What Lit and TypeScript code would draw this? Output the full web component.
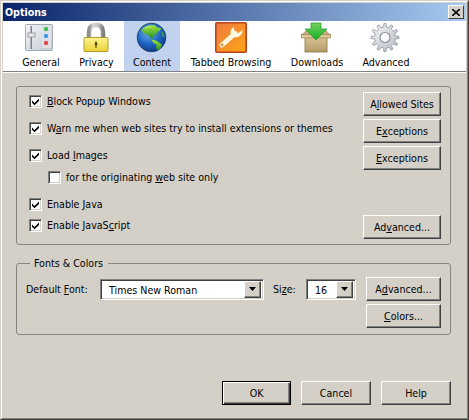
import { LitElement, html, css, svg } from "lit";
import { customElement } from "lit/decorators.js";

function gearPath(cx: number, cy: number, ro: number, ri: number, n: number) {
  const pts: string[] = [];
  for (let i = 0; i < n; i++) {
    const a = (i / n) * Math.PI * 2;
    const w = (Math.PI * 2) / n;
    const seq: [number, number][] = [
      [a - w * 0.5, ri],
      [a - w * 0.24, ri],
      [a - w * 0.16, ro],
      [a + w * 0.16, ro],
      [a + w * 0.24, ri],
    ];
    for (const [t, r] of seq) {
      pts.push(`${(cx + Math.cos(t) * r).toFixed(2)} ${(cy + Math.sin(t) * r).toFixed(2)}`);
    }
  }
  return "M" + pts.join("L") + "Z";
}

const generalIcon = svg`<svg class="ico" viewBox="0 0 32 32" width="32" height="32">
  <defs><linearGradient id="gp" x1="0" y1="0" x2="1" y2="1"><stop offset="0" stop-color="#f4f5f7"/><stop offset="1" stop-color="#c3c9d2"/></linearGradient></defs>
  <rect x="0.5" y="2.5" width="27" height="26" rx="1" fill="url(#gp)" stroke="#a4aab2"/>
  <rect x="5.500" y="4" width="1.500" height="23" fill="#7d8288"/>
  <rect x="3" y="11" width="7" height="4" fill="#e8e9ea" stroke="#8a8f95" stroke-width="0.8"/>
  <rect x="17" y="4" width="9" height="22" fill="#dfe2e6"/>
  <rect x="19" y="5" width="4" height="4" fill="#31b53d" stroke="#bfe0c0" stroke-width="0.6"/>
  <rect x="19" y="12" width="4" height="4" fill="#2f8fe0" stroke="#bcd6ee" stroke-width="0.6"/>
  <rect x="19" y="19" width="4" height="4" fill="#d9363c" stroke="#eec2c4" stroke-width="0.6"/>
</svg>`;

const privacyIcon = svg`<svg class="ico" viewBox="0 0 32 32" width="32" height="32">
  <defs>
    <linearGradient id="ly" x1="0" y1="0" x2="0" y2="1"><stop offset="0" stop-color="#fdf68e"/><stop offset="1" stop-color="#ead037"/></linearGradient>
    <linearGradient id="ls" x1="0" y1="0" x2="1" y2="0"><stop offset="0" stop-color="#8c8c8c"/><stop offset="0.3" stop-color="#d8d8d8"/><stop offset="0.7" stop-color="#bdbdbd"/><stop offset="1" stop-color="#7d7d7d"/></linearGradient>
  </defs>
  <path d="M8 16V10.500C8 5 10.500 3 15 3S22 5 22 10.500V16" fill="none" stroke="url(#ls)" stroke-width="4.500"/>
  <rect x="3" y="15.500" width="24" height="14" rx="1" fill="url(#ly)" stroke="#b29a2c"/>
  <path d="M15 18.500l1.600 4-1 1v2.500h-1.200V23.500l-1-1z" fill="#5a4a10"/>
</svg>`;

const contentIcon = svg`<svg class="ico" viewBox="0 0 32 32" width="32" height="32">
  <defs>
    <radialGradient id="gb" cx="0.4" cy="0.3" r="0.8"><stop offset="0" stop-color="#6fb4ee"/><stop offset="0.55" stop-color="#1c63c0"/><stop offset="1" stop-color="#0c2f73"/></radialGradient>
    <linearGradient id="gg" x1="0" y1="0" x2="0" y2="1"><stop offset="0" stop-color="#a5e63a"/><stop offset="1" stop-color="#21892e"/></linearGradient>
  </defs>
  <circle cx="15.500" cy="15.500" r="14.300" fill="url(#gb)" stroke="#10305f" stroke-width="0.8"/>
  <path d="M6 7.500C9 3.800 14 2.500 19 3.500L21 5.500 25 6 24 9 21.500 9.500 20 13 17.500 13.500 16.500 17 13.500 15 11.500 13 8.500 11.500 6.500 10.500z" fill="url(#gg)"/>
  <path d="M15.500 17.500L20 18.500 24 21 26 23 24 27 21.500 28.500 20 26 20.500 23 17 20.500z" fill="url(#gg)"/>
  <path d="M25.500 9l2.500 3 .5 4-2-2z" fill="#47a838"/>
  <path d="M9 7c2-1.500 4-2 6-2" fill="none" stroke="#e3fbb0" stroke-width="1" opacity=".6"/>
</svg>`;

const tabbedIcon = svg`<svg class="ico" viewBox="0 0 32 32" width="32" height="32">
  <defs><linearGradient id="or" x1="0" y1="0" x2="1" y2="1"><stop offset="0" stop-color="#ee7a42"/><stop offset="1" stop-color="#ffa514"/></linearGradient></defs>
  <rect x="0.800" y="0.800" width="30.400" height="29.400" rx="1" fill="url(#or)" stroke="#b8431c" stroke-width="1.600"/>
  <path d="M7 23L20 11.500" stroke="#fff6df" stroke-width="5" stroke-linecap="round" fill="none"/>
  <path d="M18.500 5A6.800 6.800 0 0 0 16 13L20.500 15.500A6.800 6.800 0 0 0 27.500 8L23.500 11 19.800 9.500z" fill="#fff6df"/>
  <circle cx="7" cy="23" r="1.400" fill="#f08a30"/>
</svg>`;

const downloadsIcon = svg`<svg class="ico" viewBox="0 0 32 32" width="32" height="32">
  <defs>
    <linearGradient id="bx" x1="0" y1="0" x2="0" y2="1"><stop offset="0" stop-color="#d9c597"/><stop offset="1" stop-color="#b59a66"/></linearGradient>
    <linearGradient id="ar" x1="0" y1="0" x2="0" y2="1"><stop offset="0" stop-color="#74d35d"/><stop offset="1" stop-color="#14ad24"/></linearGradient>
  </defs>
  <rect x="4" y="15" width="22" height="15" fill="url(#bx)" stroke="#8a7448" stroke-width="0.800"/>
  <path d="M4 15L0.500 13 5 9 9 9 8 15zM26 15L29.500 13 25 9 21 9 22 15z" fill="#c9b27d" stroke="#8f7a4e" stroke-width="0.600"/>
  <rect x="0.500" y="12.500" width="29" height="3.500" fill="#dcc99b" stroke="#8f7a4e" stroke-width="0.600"/>
  <path d="M10 1H20V7H26L15 18 4 7H10z" fill="url(#ar)" stroke="#2f9a33" stroke-width="0.800"/>
</svg>`;

const advancedIcon = svg`<svg class="ico" viewBox="0 0 32 32" width="32" height="32">
  <defs><linearGradient id="gr" x1="0" y1="0" x2="1" y2="1"><stop offset="0" stop-color="#f6f7f9"/><stop offset="1" stop-color="#b4b8c2"/></linearGradient></defs>
  <path d="${gearPath(15, 15.5, 14, 10.5, 12)}" fill="url(#gr)" stroke="#8f939e" stroke-width="0.800"/>
  <circle cx="15" cy="15.500" r="5" fill="#fff" stroke="#8d919c" stroke-width="1.200"/>
</svg>`;

const arrow = html`<span class="arrow"><svg width="7" height="4" viewBox="0 0 7 4"><path d="M0 0H7L3.500 4z" fill="#000"/></svg></span>`;

const check = html`<svg class="tick" width="9" height="9" viewBox="0 0 9 9"><path d="M1 3.500L3.500 6 8 1.500V4L3.500 8.300 1 5.800z" fill="#000"/></svg>`;

@customElement("app-root")
export class AppRoot extends LitElement {
  static styles = css`
    :host {
      display: block;
      width: 469px;
      height: 420px;
      font: 10.6px/13px "DejaVu Sans Condensed", "DejaVu Sans", sans-serif;
      color: #000;
      background: #d4d0c8;
    }
    * { box-sizing: border-box; }
    .frame {
      width: 469px;
      height: 420px;
      border: 1px solid;
      border-color: #d4d0c8 #404040 #404040 #d4d0c8;
    }
    .frame2 {
      height: 100%;
      border: 1px solid;
      border-color: #fff #808080 #808080 #fff;
      padding: 1px;
    }
    .title {
      height: 18px;
      background: linear-gradient(90deg, #0a246a, #a6caf0);
      display: flex;
      align-items: center;
      justify-content: space-between;
      padding: 0 2px;
      color: #fff;
      font-weight: bold;
    }
    .close {
      width: 16px;
      height: 14px;
      background: #d4d0c8;
      border: 1px solid;
      border-color: #fff #404040 #404040 #fff;
      display: flex;
      align-items: center;
      justify-content: center;
    }
    .toolbar {
      height: 50px;
      background: #fff;
      display: grid;
      grid-template-columns: 56px 55px 56px 102px 70px 68px;
      padding-left: 10px;
    }
    .tab {
      display: flex;
      flex-direction: column;
      align-items: center;
      padding-top: 1px;
      white-space: nowrap;
    }
    .tab.sel { background: #c1d2ee; }
    .tab .ico { display: block; margin-bottom: 2px; }
    .rule {
      height: 2px;
      border-top: 1px solid #808080;
      border-bottom: 1px solid #fff;
    }
    .body {
      padding: 13px 15px 0 13px;
    }
    .group {
      border: 1px solid #86847e;
      border-radius: 3px;
      display: flex;
      justify-content: space-between;
      height: 159px;
      padding: 5px 9px 0 12px;
    }
    .checks {
      display: flex;
      flex-direction: column;
      padding-top: 3px;
    }
    .chk {
      display: flex;
      align-items: center;
      height: 13px;
      gap: 5px;
      white-space: nowrap;
    }
    .m14 { margin-top: 14px; }
    .m9 { margin-top: 9px; padding-left: 19px; }
    .m8 { margin-top: 8px; }
    .box {
      width: 13px;
      height: 13px;
      flex: none;
      background: #fff;
      border: 1px solid;
      border-color: #808080 #fff #fff #808080;
      box-shadow: inset 1px 1px 0 #404040, inset -1px -1px 0 #d4d0c8;
      display: flex;
      align-items: center;
      justify-content: center;
    }
    .tick { display: block; }
    .sidebtns {
      display: flex;
      flex-direction: column;
      gap: 3px;
    }
    .btn {
      width: 78px;
      height: 24px;
      background: #d4d0c8;
      border: 1px solid;
      border-color: #fff #404040 #404040 #fff;
      box-shadow: inset -1px -1px 0 #808080;
      display: flex;
      align-items: center;
      justify-content: center;
      white-space: nowrap;
      padding: 0;
      font: inherit;
      color: #000;
    }
    .adv { margin-top: 42px; }
    fieldset {
      margin: 12px 0 0;
      padding: 0 9px 6px 9px;
      border: 1px solid #86847e;
      border-radius: 3px;
      min-width: 0;
    }
    legend {
      margin-left: 4px;
      padding: 0 5px 0 4px;
      line-height: 13px;
    }
    .fonts {
      display: grid;
      grid-template-columns: 74px 164px 42px 50px 10px 75px;
      row-gap: 3px;
      align-items: center;
      margin-top: 7px;
    }
    .sizeL { padding-left: 9px; }
    .sel-box {
      height: 21px;
      background: #fff;
      border: 1px solid;
      border-color: #808080 #fff #fff #808080;
      box-shadow: inset 1px 1px 0 #404040, inset -1px -1px 0 #d4d0c8;
      display: flex;
      align-items: center;
      justify-content: space-between;
      padding: 2px 2px 2px 8px;
    }
    .sel-text { padding-top: 2px; }
    .arrow {
      width: 17px;
      height: 17px;
      background: #d4d0c8;
      border: 1px solid;
      border-color: #fff #404040 #404040 #fff;
      box-shadow: inset -1px -1px 0 #808080;
      display: flex;
      align-items: center;
      justify-content: center;
    }
    .fonts .btn { width: 75px; }
    .colors { grid-column: 6; }
    .footer {
      display: flex;
      justify-content: flex-end;
      margin-top: 46px;
      gap: 10px;
    }
    .footer .btn { width: 70px; }
    .ok { width: 69px !important; border-color: #000 !important; box-shadow: inset 1px 1px 0 #fff, inset -1px -1px 0 #404040, inset -2px -2px 0 #808080; }
    u { text-underline-offset: 1px; }
  `;

  render() {
    return html`
      <div class="frame"><div class="frame2">
        <div class="title">
          <span>Options</span>
          <span class="close"><svg width="8" height="7" viewBox="0 0 8 7"><path d="M0 0L8 7M8 0L0 7" stroke="#000" stroke-width="1.600"/></svg></span>
        </div>
        <div class="toolbar">
          <div class="tab">${generalIcon}General</div>
          <div class="tab">${privacyIcon}Privacy</div>
          <div class="tab sel">${contentIcon}Content</div>
          <div class="tab">${tabbedIcon}Tabbed Browsing</div>
          <div class="tab">${downloadsIcon}Downloads</div>
          <div class="tab">${advancedIcon}Advanced</div>
        </div>
        <div class="rule"></div>
        <div class="body">
          <div class="group">
            <div class="checks">
              <div class="chk"><span class="box">${check}</span><span><u>B</u>lock Popup Windows</span></div>
              <div class="chk m14"><span class="box">${check}</span><span>W<u>a</u>rn me when web sites try to install extensions or themes</span></div>
              <div class="chk m14"><span class="box">${check}</span><span>Load <u>I</u>mages</span></div>
              <div class="chk m9"><span class="box"></span><span>for the originating <u>w</u>eb site only</span></div>
              <div class="chk m14"><span class="box">${check}</span><span>Enable <u>J</u>ava</span></div>
              <div class="chk m8"><span class="box">${check}</span><span>Enable JavaS<u>c</u>ript</span></div>
            </div>
            <div class="sidebtns">
              <button class="btn">A<u>l</u>lowed Sites</button>
              <button class="btn">E<u>x</u>ceptions</button>
              <button class="btn"><u>E</u>xceptions</button>
              <button class="btn adv">Ad<u>v</u>anced...</button>
            </div>
          </div>
          <fieldset>
            <legend>Fonts &amp; Colors</legend>
            <div class="fonts">
              <span>Default <u>F</u>ont:</span>
              <div class="sel-box"><span class="sel-text">Times New Roman</span>${arrow}</div>
              <span class="sizeL">Si<u>z</u>e:</span>
              <div class="sel-box"><span class="sel-text">16</span>${arrow}</div>
              <span></span>
              <button class="btn">A<u>d</u>vanced...</button>
              <button class="btn colors"><u>C</u>olors...</button>
            </div>
          </fieldset>
          <div class="footer">
            <button class="btn ok">OK</button>
            <button class="btn">Cancel</button>
            <button class="btn">Help</button>
          </div>
        </div>
      </div></div>
    `;
  }
}
